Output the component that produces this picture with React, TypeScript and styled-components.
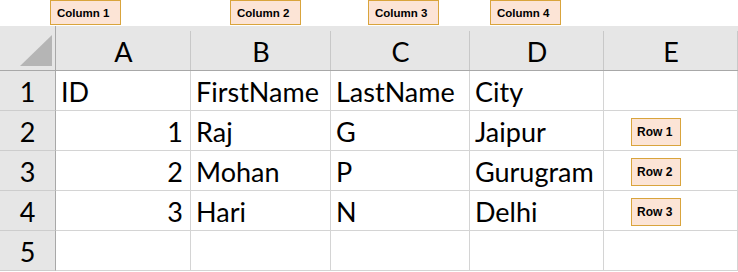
import { Fragment } from "react";
import styled, { createGlobalStyle } from "styled-components";

const GlobalStyle = createGlobalStyle`
  html, body {
    margin: 0;
    padding: 0;
    background: #ffffff;
  }
`

const Page = styled.div`
  width: 738px;
  height: 272px;
  overflow: hidden;
  background: #ffffff;
  font-family: Lato, "Open Sans", sans-serif;
  color: #000000;
`

const TagStrip = styled.div`
  display: flex;
  height: 26px;
`

const Tag = styled.div<{ $offset: number }>`
  box-sizing: border-box;
  margin-left: ${(p) => p.$offset}px;
  width: 71px;
  height: 25px;
  padding-left: 6px;
  display: flex;
  align-items: center;
  background: #fce4d6;
  border: 1px solid #d9a43c;
  font-family: "Liberation Sans", Arial, sans-serif;
  font-weight: bold;
  font-size: 11.5px;
`

const RowTag = styled(Tag)`
  width: 50px;
  height: 28px;
  padding-left: 5px;
  font-size: 12px;
`

const Sheet = styled.div`
  display: grid;
  grid-template-columns: 56px 135px 140px 139px 134px 134px;
  grid-template-rows: 45px repeat(5, 40px);
`

const Corner = styled.div`
  box-sizing: border-box;
  background: #e6e6e6;
  border-right: 1px solid #a8a8a8;
  border-bottom: 1px solid #a8a8a8;
  display: flex;
  align-items: flex-end;
  justify-content: flex-end;
  padding: 0 3px 4px 0;
`

const ColHeader = styled.div`
  position: relative;
  box-sizing: border-box;
  background: #e6e6e6;
  border-bottom: 1px solid #a8a8a8;
  display: flex;
  align-items: center;
  justify-content: center;
  padding-top: 6px;
  font-size: 27px;

  &::after {
    content: "";
    position: absolute;
    right: 0;
    top: 5px;
    bottom: 0;
    width: 1px;
    background: #c8c8c8;
  }
`

const RowHeader = styled.div`
  box-sizing: border-box;
  background: #e6e6e6;
  border-right: 1px solid #a8a8a8;
  border-bottom: 1px solid #cdcdcd;
  display: flex;
  align-items: center;
  justify-content: center;
  padding-top: 2px;
  font-size: 27px;
`

const Cell = styled.div<{ $align?: "left" | "right" }>`
  box-sizing: border-box;
  border-right: 1px solid #d4d4d4;
  border-bottom: 1px solid #d4d4d4;
  display: flex;
  align-items: center;
  justify-content: ${(p) => (p.$align === "right" ? "flex-end" : "flex-start")};
  padding: 2px 7px 0 5px;
  font-size: 27px;
  white-space: nowrap;
`

const columns = ["A", "B", "C", "D", "E"];

const rows: { id: string; first: string; last: string; city: string; tag?: string }[] = [
  { id: "ID", first: "FirstName", last: "LastName", city: "City" },
  { id: "1", first: "Raj", last: "G", city: "Jaipur", tag: "Row 1" },
  { id: "2", first: "Mohan", last: "P", city: "Gurugram", tag: "Row 2" },
  { id: "3", first: "Hari", last: "N", city: "Delhi", tag: "Row 3" },
  { id: "", first: "", last: "", city: "" },
];

export default function App() {
  return (
    <Page>
      <GlobalStyle />
      <TagStrip>
        <Tag $offset={50}>Column 1</Tag>
        <Tag $offset={109}>Column 2</Tag>
        <Tag $offset={67}>Column 3</Tag>
        <Tag $offset={51}>Column 4</Tag>
      </TagStrip>
      <Sheet>
        <Corner>
          <svg width="32" height="31" viewBox="0 0 32 31">
            <polygon points="32,0 32,31 0,31" fill="#b5b5b5" />
          </svg>
        </Corner>
        {columns.map((c) => (
          <ColHeader key={c}>{c}</ColHeader>
        ))}
        {rows.map((r, i) => (
          <Fragment key={i}>
            <RowHeader>{i + 1}</RowHeader>
            <Cell $align={i > 0 ? "right" : "left"}>{r.id}</Cell>
            <Cell>{r.first}</Cell>
            <Cell>{r.last}</Cell>
            <Cell>{r.city}</Cell>
            <Cell>{r.tag && <RowTag $offset={22}>{r.tag}</RowTag>}</Cell>
          </Fragment>
        ))}
      </Sheet>
    </Page>
  );
}
